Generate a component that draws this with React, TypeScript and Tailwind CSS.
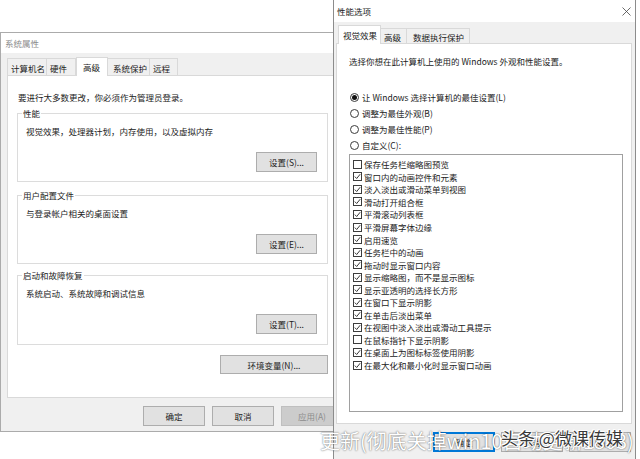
import React from "react";

const ITEMS: [string, boolean][] = [
  ["保存任务栏缩略图预览", false],
  ["窗口内的动画控件和元素", true],
  ["淡入淡出或滑动菜单到视图", true],
  ["滑动打开组合框", true],
  ["平滑滚动列表框", true],
  ["平滑屏幕字体边缘", true],
  ["启用速览", true],
  ["任务栏中的动画", true],
  ["拖动时显示窗口内容", true],
  ["显示缩略图，而不是显示图标", true],
  ["显示亚透明的选择长方形", true],
  ["在窗口下显示阴影", true],
  ["在单击后淡出菜单", true],
  ["在视图中淡入淡出或滑动工具提示", true],
  ["在鼠标指针下显示阴影", false],
  ["在桌面上为图标标签使用阴影", true],
  ["在最大化和最小化时显示窗口动画", true],
];

function Check({ checked }: { checked: boolean }) {
  return (
    <span className="w-[9px] h-[9px] border border-[#3c3c3c] bg-white flex items-center justify-center shrink-0">
      {checked && (
        <svg width="7" height="7" viewBox="0 0 7 7">
          <path d="M0.8 3.6 L2.7 5.5 L6.2 1.2" fill="none" stroke="#222" strokeWidth="0.9" />
        </svg>
      )}
    </span>
  );
}

function Radio({ on }: { on: boolean }) {
  return (
    <span className="w-[9px] h-[9px] rounded-full border border-[#3c3c3c] bg-white flex items-center justify-center shrink-0">
      {on && <span className="w-[5px] h-[5px] rounded-full bg-[#111]" />}
    </span>
  );
}

function Btn({
  children,
  className,
  kind,
}: {
  children: React.ReactNode;
  className: string;
  kind?: "primary" | "disabled";
}) {
  const base = "flex items-center justify-center shrink-0 border ";
  const look =
    kind === "disabled"
      ? "bg-[#cccccc] border-[#bfbfbf] text-[#8d8d8d]"
      : kind === "primary"
      ? "bg-[#e1e1e1] border-[#0078d7] shadow-[inset_0_0_0_1px_#0078d7] text-[#222]"
      : "bg-[#e1e1e1] border-[#adadad] text-[#222]";
  return <div className={base + look + " " + className}>{children}</div>;
}

function Group({ title, text, btn, h }: { title: string; text: string; btn: string; h: string }) {
  return (
    <fieldset className={"border border-[#dcdcdc] pl-[4px] pr-[10px] flex flex-col " + h}>
      <legend className="px-[1px] leading-[12px] text-[#222]">{title}</legend>
      <div className="mt-[6px] pl-[4px] text-[#222]">{text}</div>
      <Btn className="self-end mt-[15px] w-[61px] h-[20px]">{btn}</Btn>
    </fieldset>
  );
}

export default function App() {
  return (
    <div className="relative w-[640px] h-[459px] bg-white overflow-hidden text-[8.5px] leading-[12px] font-['Noto_Sans_CJK_SC','Noto_Sans',sans-serif] text-[#222]">
      {/* 系统属性 */}
      <div className="absolute left-0 top-[32px] w-[350px] h-[400px] bg-[#f0f0f0] border border-[#ababab] flex flex-col">
        <div className="h-[20px] bg-white flex items-center pl-[4px] text-[#8c8c8c]">系统属性</div>
        <div className="flex flex-col px-[6px] pt-[4px]">
          <div className="flex items-end h-[19px]">
            <div className="w-[40px] h-[18px] pl-[3px] flex items-center border border-b-0 border-[#d9d9d9] bg-[#f0f0f0]">计算机名</div>
            <div className="w-[29px] h-[18px] pl-[3px] flex items-center border border-b-0 border-l-0 border-[#d9d9d9] bg-[#f0f0f0]">硬件</div>
            <div className="relative z-10 w-[32px] h-[19px] pl-[6px] flex items-center border border-b-0 border-[#d9d9d9] bg-white">高级</div>
            <div className="w-[42px] h-[18px] pl-[5px] flex items-center border border-b-0 border-l-0 border-[#d9d9d9] bg-[#f0f0f0]">系统保护</div>
            <div className="w-[28px] h-[18px] pl-[3px] flex items-center border border-b-0 border-l-0 border-[#d9d9d9] bg-[#f0f0f0]">远程</div>
          </div>
          <div className="-mt-px h-[323px] bg-white border border-[#d9d9d9]">
            <div className="ml-[9px] w-[311px] pt-[15px] flex flex-col">
              <div className="pl-[1px]">要进行大多数更改，你必须作为管理员登录。</div>
              <div className="mt-[4px]">
                <Group title="性能" text="视觉效果，处理器计划，内存使用，以及虚拟内存" btn="设置(S)..." h="h-[75px]" />
              </div>
              <div className="mt-[7px]">
                <Group title="用户配置文件" text="与登录帐户相关的桌面设置" btn="设置(E)..." h="h-[75px]" />
              </div>
              <div className="mt-[5px]">
                <Group title="启动和故障恢复" text="系统启动、系统故障和调试信息" btn="设置(T)..." h="h-[76px]" />
              </div>
              <Btn className="self-end mt-[10px] w-[108px] h-[19px]">环境变量(N)...</Btn>
            </div>
          </div>
          <div className="flex justify-end gap-[7px] mt-[8px]">
            <Btn className="w-[62px] h-[20px]">确定</Btn>
            <Btn className="w-[62px] h-[20px]">取消</Btn>
            <Btn className="w-[62px] h-[20px]" kind="disabled">应用(A)</Btn>
          </div>
        </div>
      </div>

      {/* 性能选项 */}
      <div className="absolute left-[333px] top-[-1px] w-[303px] h-[475px] bg-[#f0f0f0] border border-[#8c8c8c] flex flex-col">
        <div className="h-[22px] bg-white flex items-center justify-between pl-[3px] pr-[4px]">
          <span className="text-[#222]">性能选项</span>
          <svg width="9" height="9" viewBox="0 0 9 9">
            <path d="M0.5 0.5 L8.5 8.5 M8.5 0.5 L0.5 8.5" stroke="#444" strokeWidth="0.8" />
          </svg>
        </div>
        <div className="flex flex-col pl-[2px] pr-[3px] pt-[3px]">
          <div className="flex items-end h-[19px] pl-[2px]">
            <div className="relative z-10 w-[43px] h-[19px] pl-[4px] flex items-center border border-b-0 border-[#d9d9d9] bg-white">视觉效果</div>
            <div className="w-[26px] h-[16px] pl-[3px] flex items-center border border-b-0 border-l-0 border-[#d9d9d9] bg-[#f0f0f0]">高级</div>
            <div className="w-[63px] h-[16px] pl-[6px] flex items-center border border-b-0 border-l-0 border-[#d9d9d9] bg-[#f0f0f0]">数据执行保护</div>
          </div>
          <div className="-mt-px h-[381px] bg-white border border-[#d9d9d9] pl-[12px] pt-[11px] flex flex-col">
            <div>选择你想在此计算机上使用的 Windows 外观和性能设置。</div>
            <div className="mt-[24px] flex flex-col gap-[4px]">
              {[
                ["让 Windows 选择计算机的最佳设置(L)", true],
                ["调整为最佳外观(B)", false],
                ["调整为最佳性能(P)", false],
                ["自定义(C):", false],
              ].map(([label, on]) => (
                <div key={label as string} className="h-[12px] flex items-center gap-[3px] ml-[1px]">
                  <Radio on={on as boolean} />
                  <span>{label as string}</span>
                </div>
              ))}
            </div>
            <div className="mt-[3px] w-[274px] h-[258px] border border-[#a0a0a0] bg-white pl-[3px] pt-[3px] flex flex-col">
              {ITEMS.map(([label, on]) => (
                <div key={label} className="h-[12.56px] flex items-center gap-[2px]">
                  <Check checked={on} />
                  <span className="leading-[12px]">{label}</span>
                </div>
              ))}
            </div>
          </div>
          <div className="flex justify-end gap-[6px] mt-[8px] pr-[1px]">
            <Btn className="w-[62px] h-[20px]" kind="primary">确定</Btn>
            <Btn className="w-[62px] h-[20px]">取消</Btn>
            <Btn className="w-[62px] h-[20px]">应用(A)</Btn>
          </div>
        </div>
      </div>

      {/* watermarks */}
      <div className="absolute left-[320px] top-[429px] text-[20px] leading-[24px] whitespace-nowrap text-white [text-shadow:0_0_2px_rgba(0,0,0,0.45),0_0_1px_rgba(0,0,0,0.35)]">
        更新(彻底关掉win10自动更新1803)
      </div>
      <div className="absolute left-[501px] top-[427px] text-[17px] leading-[22px] whitespace-nowrap text-[#3a3a3a] [text-shadow:1px_0_#fff,-1px_0_#fff,0_1px_#fff,0_-1px_#fff,1px_1px_#fff,-1px_-1px_#fff]">
        头条 @微课传媒
      </div>
    </div>
  );
}
